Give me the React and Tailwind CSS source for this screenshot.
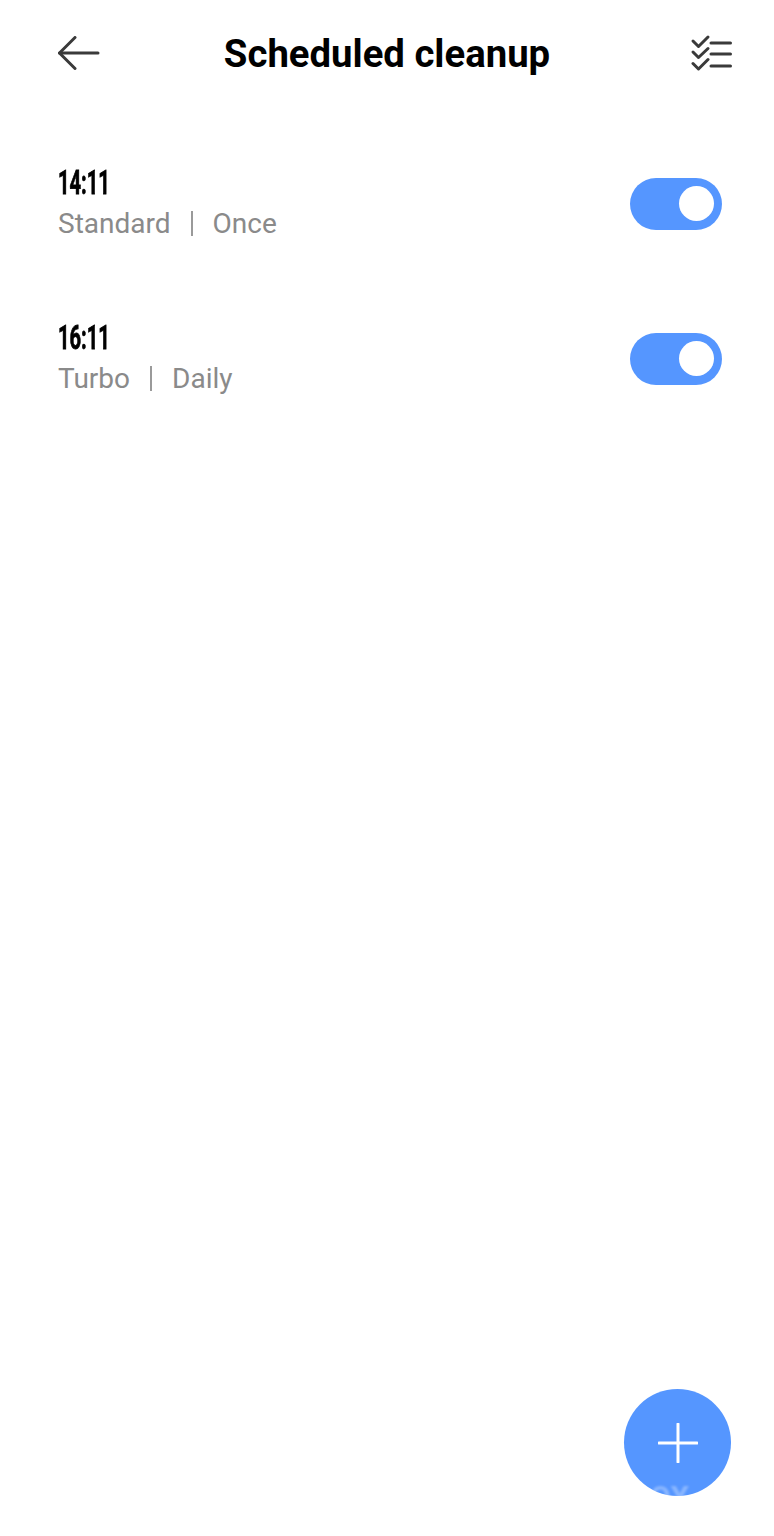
import React from "react";

function Row({ time, a, b }) {
  return (
    <div className="flex h-[155px] items-center justify-between pl-[58px] pr-[52px]">
      <div className="flex flex-col pt-[2px]">
        <span className="h-[36px] origin-left scale-x-[0.61] text-[33px] font-bold leading-[35px] text-black [-webkit-text-stroke:0.8px_black]">{time}</span>
        <span className="flex h-[44px] items-center pt-[2px] text-[28px] leading-[44px] text-[#8a8a8a]">
          <span>{a}</span>
          <span className="ml-[20px] mr-[20px] h-[25px] w-[2px] bg-[#9a9a9a]" />
          <span>{b}</span>
        </span>
      </div>
      <div className="flex h-[52px] w-[92px] items-center justify-end rounded-full bg-[#5596ff] pr-[8px]">
        <div className="h-[35px] w-[35px] rounded-full bg-white" />
      </div>
    </div>
  );
}

export default function App() {
  return (
    <div className="flex h-[1536px] w-[774px] flex-col bg-white [font-family:Roboto,sans-serif]">
      <header className="flex h-[105px] items-center px-[42px]">
        <div className="flex w-[58px] justify-end">
          <svg width="42" height="34" viewBox="0 0 42 34" fill="none" stroke="#3a3a3a" strokeWidth="3" strokeLinecap="round" strokeLinejoin="round">
            <path d="M1.5 17H40" />
            <path d="M17 1.5L1.5 17L17 32.5" />
          </svg>
        </div>
        <h1 className="flex-1 pt-[2px] text-center text-[38.3px] font-bold leading-[44px] text-black">Scheduled cleanup</h1>
        <div className="flex w-[58px] justify-end">
          <svg width="42" height="37" viewBox="0 0 42 37" fill="none" stroke="#3a3a3a" strokeWidth="3" strokeLinecap="round" strokeLinejoin="round">
            <path d="M3 7L8.5 12.5L18 3" />
            <path d="M3 18L8.5 23.5L18 14.5" />
            <path d="M3 29.5L8.5 35L18 25.5" />
            <path d="M21 9H40.5" />
            <path d="M21 20H40.5" />
            <path d="M21 32H40.5" />
          </svg>
        </div>
      </header>
      <div className="mt-[21px] flex flex-col">
        <Row time="14:11" a="Standard" b="Once" />
        <Row time="16:11" a="Turbo" b="Daily" />
      </div>
      <div className="relative mt-auto mb-[40px] mr-[43px] flex h-[107px] w-[107px] items-center justify-center self-end overflow-hidden rounded-full bg-[#5596ff]">
        <svg width="40" height="40" viewBox="0 0 40 40" fill="none" stroke="#ffffff" strokeWidth="3" strokeLinecap="round">
          <path d="M20 1V39" />
          <path d="M1 20H39" />
        </svg>
        <span className="absolute left-[26px] top-[90px] text-[30px] font-bold leading-[36px] text-white/30 blur-[1px]">OX</span>
      </div>
    </div>
  );
}
